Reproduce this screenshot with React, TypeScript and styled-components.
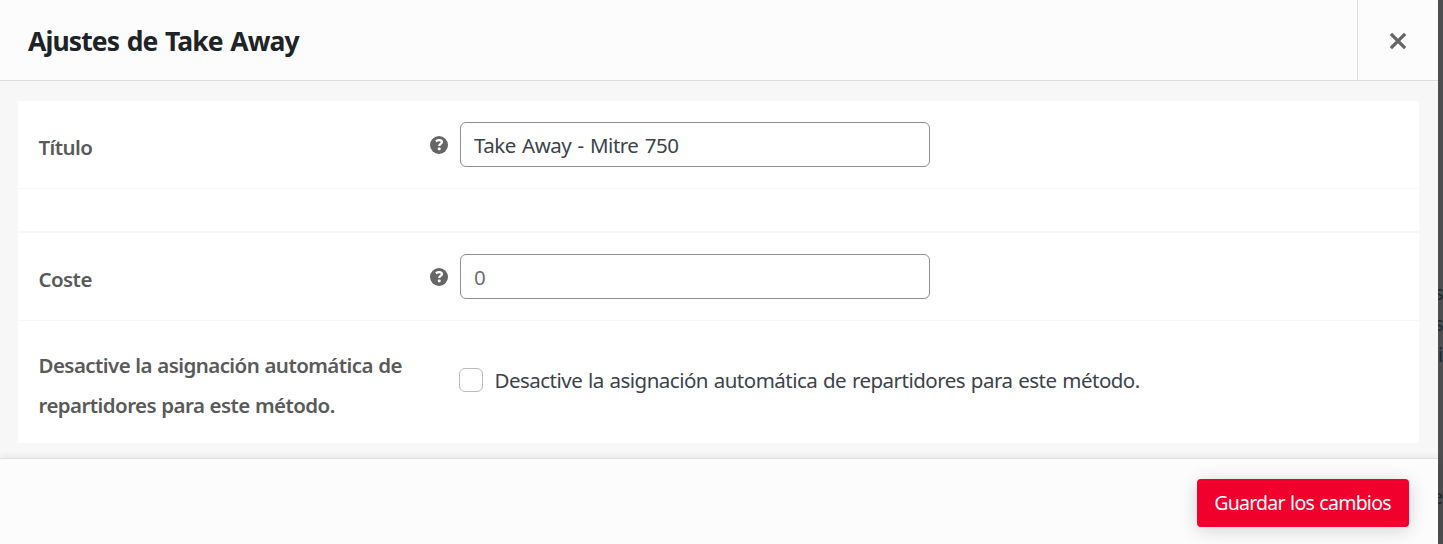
import React from 'react';
import styled, { createGlobalStyle } from 'styled-components';

const GlobalStyle = createGlobalStyle`
  * { box-sizing: border-box; }
  body { margin: 0; overflow: hidden; font-family: 'Noto Sans', 'Open Sans', sans-serif; }
`;

const Page = styled.div`
  display: flex;
  width: 1443px;
  height: 544px;
  overflow: hidden;
  background: #4d4e50;
`;

const Modal = styled.section`
  display: flex;
  flex-direction: column;
  flex: none;
  width: 1438px;
  background: #f7f7f7;
`;

const Header = styled.header`
  display: flex;
  flex: none;
  height: 81px;
  background: #fcfcfc;
  border-bottom: 1px solid #ddd;
`;

const Title = styled.h1`
  flex: 1;
  margin: 0;
  padding-left: 28px;
  font-size: 26.5px;
  font-weight: 700;
  line-height: 83px;
  letter-spacing: -0.9px;
  word-spacing: 1.6px;
  color: #1d2327;
`;

const CloseButton = styled.button`
  display: flex;
  align-items: center;
  justify-content: center;
  width: 81px;
  height: 80px;
  padding: 1px 0 0;
  border: 0;
  border-left: 1px solid #ddd;
  background: transparent;
`;

const Body = styled.div`
  flex: 1;
  padding: 20px 19px 0 18px;
`;

const Card = styled.div`
  background: #fff;
`;

const Row = styled.div<{ $height: number; $line?: number }>`
  display: flex;
  height: ${(p) => p.$height}px;
  border-bottom: ${(p) => p.$line ?? 0}px solid #f7f7f7;
`;

const Label = styled.div<{ $top: number }>`
  width: 411px;
  padding: ${(p) => p.$top}px 0 0 20.5px;
  font-size: 20.5px;
  font-weight: 600;
  line-height: 40px;
  letter-spacing: -0.57px;
  word-spacing: 0.5px;
  white-space: nowrap;
  color: #5a5a5a;
`;

const Help = styled.svg`
  flex: none;
  margin: 35px 12px 0 1px;
`;

const Input = styled.input`
  width: 470px;
  height: 45px;
  margin-top: 21px;
  padding: 0 13px 0 13px;
  border: 1px solid #8c8f94;
  border-radius: 6px;
  background: #fff;
  font-family: inherit;
  font-size: 20.5px;
  letter-spacing: -0.5px;
  word-spacing: 1.5px;
  color: #3c434a;
  outline: 0;
  &::placeholder { color: #6c7077; opacity: 1; }
`;

const CheckLabel = styled.label`
  display: flex;
  align-items: center;
  height: 40px;
  margin: 39px 0 0 30px;
  gap: 11.5px;
  font-size: 20.5px;
  letter-spacing: -0.52px;
  word-spacing: 1px;
  white-space: nowrap;
  color: #3c434a;
`;

const Checkbox = styled.input`
  appearance: none;
  width: 24px;
  height: 24px;
  margin: 0;
  border: 1px solid #bbb;
  border-radius: 6px;
  background: #fff;
`;

const Footer = styled.footer`
  display: flex;
  flex: none;
  justify-content: flex-end;
  height: 86px;
  padding: 20px 29px 0 0;
  background: #fcfcfc;
  border-top: 1px solid #dfdfdf;
  box-shadow: 0 0 8px rgba(0, 0, 0, 0.1);
`;

const SaveButton = styled.button`
  width: 212px;
  height: 48px;
  padding: 0 1px 1px 0;
  border: 0;
  border-radius: 4px;
  background: #f2002d;
  box-shadow: 0 3px 18px rgba(0, 0, 0, 0.17);
  font-family: inherit;
  font-size: 19.5px;
  letter-spacing: -0.75px;
  word-spacing: 1px;
  white-space: nowrap;
  color: #fff;
`;

const Backdrop = styled.aside`
  display: flex;
  flex-direction: column;
  flex: 1;
  min-width: 0;
  overflow: hidden;
  padding-top: 277px;
  font-size: 20px;
  line-height: 31px;
  color: #24272b;
`;

const Fragment = styled.span<{ $shift?: number; $gap?: number; $link?: boolean }>`
  margin-left: ${(p) => p.$shift ?? -4}px;
  margin-top: ${(p) => p.$gap ?? 0}px;
  color: ${(p) => (p.$link ? '#172b3d' : 'inherit')};
`;

const HelpIcon = () => (
  <Help width="18" height="18" viewBox="0 0 18 18" aria-hidden="true">
    <circle cx="9" cy="9" r="9" fill="#666" />
    <path
      d="M5.9 5.3C7 4.4 8.2 4.2 9.2 4.2c1.8 0 2.7.8 2.7 1.9 0 1.8-2.7 1.9-2.7 3.9"
      fill="none"
      stroke="#fff"
      strokeWidth="2.3"
    />
    <rect x="7.9" y="11.5" width="2.7" height="2.7" rx="0.8" fill="#fff" />
  </Help>
);

export default function App() {
  return (
    <>
      <GlobalStyle />
      <Page>
        <Modal>
          <Header>
            <Title>Ajustes de Take Away</Title>
            <CloseButton aria-label="Cerrar">
              <svg width="18" height="18" viewBox="0 0 18 18">
                <path d="M1.9 1.9 16.1 16.1M16.1 1.9 1.9 16.1" stroke="#666" strokeWidth="3.3" />
              </svg>
            </CloseButton>
          </Header>
          <Body>
            <Card>
              <Row $height={88} $line={1}>
                <Label $top={26}>Título</Label>
                <HelpIcon />
                <Input defaultValue="Take Away - Mitre 750" />
              </Row>
              <Row $height={44} $line={2} />
              <Row $height={88} $line={1}>
                <Label $top={26}>Coste</Label>
                <HelpIcon />
                <Input placeholder="0" />
              </Row>
              <Row $height={122}>
                <Label $top={24}>
                  Desactive la asignación automática de
                  <br />
                  repartidores para este método.
                </Label>
                <CheckLabel>
                  <Checkbox type="checkbox" />
                  Desactive la asignación automática de repartidores para este método.
                </CheckLabel>
              </Row>
            </Card>
          </Body>
          <Footer>
            <SaveButton>Guardar los cambios</SaveButton>
          </Footer>
        </Modal>
        <Backdrop aria-hidden="true">
          <Fragment>s</Fragment>
          <Fragment>s</Fragment>
          <Fragment $shift={0} $link>i</Fragment>
          <Fragment $gap={111} $shift={-6}>e</Fragment>
        </Backdrop>
      </Page>
    </>
  );
}
